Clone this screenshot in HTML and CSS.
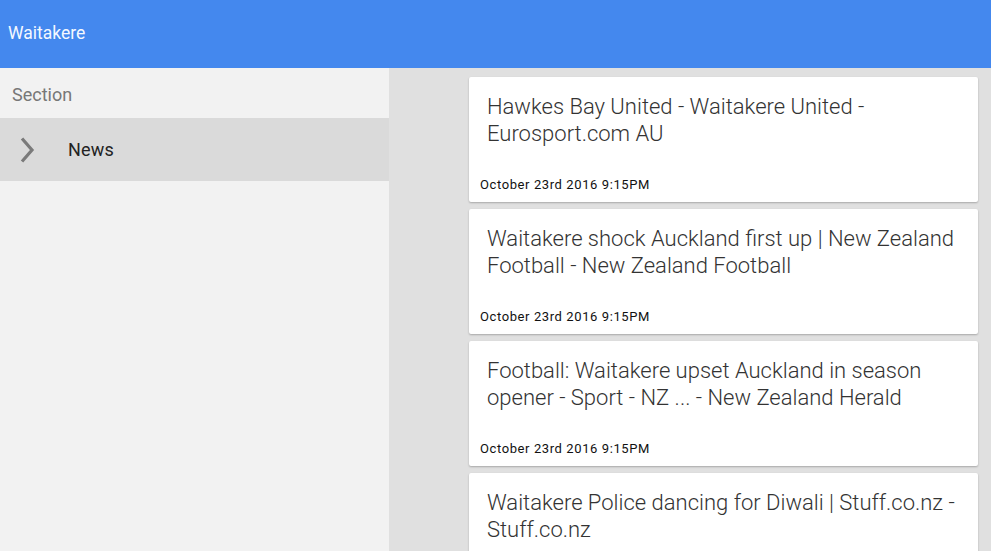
FILE: index.html
```html
<!DOCTYPE html>
<html lang="en">
  <head>
    <meta charset="utf-8">
    <title>Waitakere</title>
    <link rel="stylesheet" href="styles.css">
  </head>
<body>

  <div class="toolbar">Waitakere</div>

  <div class="layout">
    <div class="sidebar">
      <div class="section">Section</div>
      <div class="item">
        <svg class="chev" width="16" height="26" viewBox="0 0 16 26">
          <path d="M3 1.5 L13 13 L3 24.5" fill="none" stroke="#7a7a7a" stroke-width="3.2"/>
        </svg>
        <span>News</span>
      </div>
    </div>

    <div class="list">
      <div class="card">
        <div class="title">Hawkes Bay United - Waitakere United - Eurosport.com AU</div>
        <div class="date">October 23rd 2016 9:15PM</div>
      </div>
      <div class="card">
        <div class="title">Waitakere shock Auckland first up | New Zealand Football - New Zealand Football</div>
        <div class="date">October 23rd 2016 9:15PM</div>
      </div>
      <div class="card">
        <div class="title">Football: Waitakere upset Auckland in season opener - Sport - NZ ... - New Zealand Herald</div>
        <div class="date">October 23rd 2016 9:15PM</div>
      </div>
      <div class="card">
        <div class="title">Waitakere Police dancing for Diwali | Stuff.co.nz - Stuff.co.nz</div>
        <div class="date">October 23rd 2016 9:15PM</div>
      </div>
    </div>
  </div>

</body>
</html>
```

FILE: styles.css
```css
html, body {
  margin: 0;
  height: 100%;
  overflow: hidden;
}
body {
  font-family: Roboto, "Liberation Sans", sans-serif;
  background: #e0e0e0;
}
.toolbar {
  height: 68px;
  background: #4488ee;
  color: #f4f8ff;
  font-size: 17.5px;
  line-height: 66px;
  padding-left: 8px;
}
.layout {
  display: flex;
  height: calc(100% - 68px);
}
.sidebar {
  width: 389px;
  flex: none;
  background: #f2f2f2;
}
.section {
  height: 50px;
  line-height: 53px;
  padding-left: 12px;
  font-size: 18px;
  color: #777;
}
.item {
  height: 63px;
  background: #dadada;
  display: flex;
  align-items: center;
  font-size: 18px;
  letter-spacing: 0.2px;
  color: #222;
}
.item .chev {
  margin-left: 19px;
  margin-right: 33px;
}
.list {
  flex: 1;
  padding: 9px 13px 0 80px;
  display: flex;
  flex-direction: column;
  gap: 7px;
}
.card {
  height: 125px;
  flex: none;
  background: #fff;
  border-radius: 2px;
  box-shadow: 0 1px 2px rgba(0,0,0,0.25);
  display: flex;
  flex-direction: column;
  justify-content: space-between;
}
.title {
  font-size: 22px;
  font-weight: 300;
  line-height: 27.4px;
  color: #333;
  padding: 16px 12px 0 18px;
}
.date {
  font-size: 13px;
  letter-spacing: 0.6px;
  line-height: 15px;
  color: #111;
  padding: 0 0 10px 11px;
}
```
